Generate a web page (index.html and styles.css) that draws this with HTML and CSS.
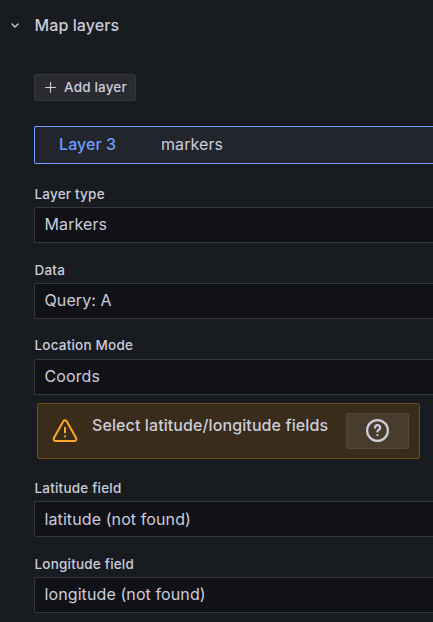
FILE: index.html
```html
<!DOCTYPE html>
<html lang="en"><head><meta charset="utf-8"><title>Map layers</title><link rel="stylesheet" href="styles.css"></head>
<body>
<header class="section-header"><svg class="chevron" viewBox="0 0 8 5"><path d="M1 1l3 3 3-3"/></svg><h1>Map layers</h1></header>
<main class="content">
<button class="add"><svg class="plus" viewBox="0 0 11 11"><path d="M5.5 .5v10M.5 5.5h10"/></svg><span>Add layer</span></button>
<div class="layer"><span class="layer-name">Layer 3</span><span class="layer-kind">markers</span></div>
<div class="field"><label>Layer type</label><div class="select">Markers</div></div>
<div class="field"><label>Data</label><div class="select">Query: A</div></div>
<div class="field raised"><label>Location Mode</label><div class="select">Coords</div></div>
<div class="alert"><svg class="warning" viewBox="0 0 26 24"><path d="M11.3 2.2a2 2 0 0 1 3.4 0l9.4 16.7a2 2 0 0 1-1.7 3H3.6a2 2 0 0 1-1.7-3z"/><path d="M13 8.8v4.8M13 17.2v.2"/></svg><span class="message">Select latitude/longitude fields</span><button class="help"><svg viewBox="0 0 23 23"><circle cx="11.5" cy="11.5" r="10.4"/><path d="M9.1 8.7a2.5 2.5 0 1 1 3.8 2c-.9.5-1.4.8-1.4 1.7M11.5 16v.1"/></svg></button></div>
<div class="field"><label>Latitude field</label><div class="select lower">latitude (not found)</div></div>
<div class="field"><label>Longitude field</label><div class="select">longitude (not found)</div></div>
</main>
</body></html>
```
FILE: styles.css
```css
* { box-sizing: border-box; }
body { margin: 0; height: 622px; overflow: hidden; background: #181b1f; color: #ccccdc; font-family: Inter, sans-serif; }
svg { fill: none; stroke: currentColor; stroke-linecap: round; stroke-linejoin: round; }
button { font: inherit; color: inherit; }
.section-header { display: flex; align-items: center; height: 50px; padding-left: 11px; }
.chevron { width: 8px; height: 5px; margin-right: 15.5px; stroke-width: 1.4; }
h1 { margin: 0; font-size: 16px; font-weight: 500; letter-spacing: .1px; }
.content { padding-left: 34px; padding-top: 24px; }
.add { display: flex; align-items: center; width: 102px; height: 27px; padding: 0 0 1px 10px; border: 1px solid #37383d; border-radius: 2px; background: #2a2b30; font-size: 13.5px; font-weight: 500; letter-spacing: .17px; }
.plus { width: 11px; height: 11px; margin-right: 8px; stroke-width: 1.1; }
.layer { display: flex; align-items: center; height: 38px; margin: 25px 0 21px; padding: 0 0 2px 24px; border: 1px solid #6e9fff; border-right: 0; border-radius: 2px 0 0 2px; background: #22252b; font-size: 16px; letter-spacing: .08px; }
.layer-name { width: 102px; color: #6e9fff; font-weight: 500; }
.field { height: 76px; }
.field label { display: block; height: 22px; padding-left: .5px; font-size: 13.5px; line-height: 19px; font-weight: 500; letter-spacing: .2px; }
.raised label { line-height: 17px; }
.select { height: 36px; padding-left: 9.5px; border: 1px solid #36373c; border-right: 0; border-radius: 2px 0 0 2px; background: #111217; font-size: 16px; line-height: 32px; letter-spacing: .1px; }
.lower { line-height: 34px; }
.alert { display: flex; align-items: center; width: 383px; height: 56px; margin: -10px 0 20px 3px; padding: 0 10px 0 13px; border: 1px solid #6f4c19; border-radius: 2px; background: #392c1b; }
.warning { width: 26px; height: 24px; margin: 0 14.5px 0 .5px; color: #ffa72c; stroke-width: 2; }
.message { flex: 1; padding-bottom: 12px; font-size: 16px; font-weight: 500; white-space: nowrap; letter-spacing: .1px; }
.help { display: flex; align-items: center; justify-content: center; width: 63px; height: 36px; padding: 0 0 1px; border: 1px solid #554735; border-radius: 2px; background: #483c2d; }
.help svg { width: 23px; height: 23px; stroke-width: 2.2; }
```
